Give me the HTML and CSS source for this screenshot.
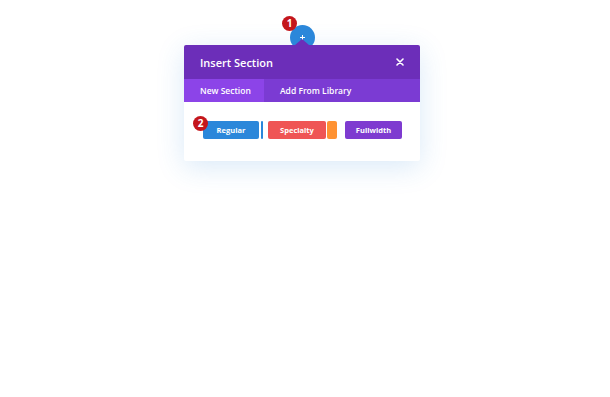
FILE: index.html
```html
<!DOCTYPE html>
<html lang="en">
<head>
<meta charset="utf-8">
<title>Insert Section</title>
<link rel="stylesheet" href="styles.css">
</head>
<body>
<div class="stage">
  <div class="modal">
    <div class="add-btn"><span class="plus"></span></div>
    <div class="notch"></div>
    <div class="badge badge-one">1</div>
    <div class="header">
      <span class="title">Insert Section</span>
      <svg class="close" width="8" height="8" viewBox="0 0 8 8"><path d="M1 1L7 7M7 1L1 7" stroke="#fff" stroke-width="1.6" stroke-linecap="round"/></svg>
    </div>
    <div class="tabs">
      <div class="tab active">New Section</div>
      <div class="tab">Add From Library</div>
    </div>
    <div class="body">
      <div class="badge badge-two">2</div>
      <div class="group">
        <div class="btn blue">Regular</div>
        <div class="bar blue thin"></div>
      </div>
      <div class="group tight">
        <div class="btn red">Specialty</div>
        <div class="bar orange"></div>
      </div>
      <div class="group wide">
        <div class="btn purple">Fullwidth</div>
      </div>
    </div>
  </div>
</div>
</body>
</html>
```

FILE: styles.css
```css
* { box-sizing: border-box; }
html, body { margin: 0; background: #fff; }
body { font-family: "Open Sans", "Liberation Sans", sans-serif; width: 610px; height: 397px; overflow: hidden; }
.stage { padding: 45px 0 0 184px; }
.modal {
  position: relative;
  width: 236px;
  background: #fff;
  border-radius: 2px;
  box-shadow: 0 6px 28px rgba(43, 135, 218, 0.18);
}
.add-btn {
  position: absolute;
  left: 106px;
  top: -20px;
  width: 25px;
  height: 25px;
  border-radius: 50%;
  background: #2b87da;
}
.plus {
  position: absolute;
  left: 10px;
  top: 10px;
  width: 5px;
  height: 5px;
}
.plus::before, .plus::after {
  content: "";
  position: absolute;
  background: #fff;
}
.plus::before { left: 2px; top: 0; width: 1px; height: 5px; }
.plus::after { left: 0; top: 2px; width: 5px; height: 1px; }
.notch {
  position: absolute;
  left: 111px;
  top: -6px;
  width: 0;
  height: 0;
  border-left: 7px solid transparent;
  border-right: 7px solid transparent;
  border-bottom: 6px solid #6c2eb9;
  z-index: 2;
}
.badge {
  position: absolute;
  width: 15px;
  height: 15px;
  border-radius: 50%;
  background: #c4161c;
  color: #fff;
  font-size: 10px;
  font-weight: 700;
  line-height: 15px;
  text-align: center;
  z-index: 3;
}
.badge-one { left: 98px; top: -29px; }
.badge-two { left: 9px; top: 14px; }
.header {
  position: relative;
  z-index: 1;
  height: 34px;
  background: #6c2eb9;
  border-radius: 2px 2px 0 0;
  display: flex;
  align-items: center;
  justify-content: space-between;
  padding: 0 16px 0 16px;
}
.title { color: #fff; font-size: 11px; font-weight: 600; }
.close { display: block; }
.tabs {
  display: flex;
  height: 23px;
  background: #7b3bd3;
}
.tab {
  display: flex;
  align-items: center;
  padding: 0 16px;
  color: #fff;
  font-size: 8.5px;
  font-weight: 600;
  white-space: nowrap;
}
.tab.active { background: #8c44e8; width: 80px; }
.body {
  position: relative;
  display: flex;
  padding: 19px 0 22px 19px;
  gap: 5px;
}
.group { display: flex; gap: 2px; height: 18px; }
.group.tight { gap: 1px; }
.group.wide { margin-left: 3px; }
.btn {
  display: flex;
  align-items: center;
  justify-content: center;
  color: #fff;
  font-size: 7.5px;
  font-weight: 700;
  border-radius: 2px;
}
.btn.blue { width: 56px; }
.btn.red { width: 58px; }
.btn.purple { width: 57px; }
.bar { border-radius: 2px; }
.bar.thin { width: 2px; border-radius: 1px; }
.bar.orange { width: 10px; background: #ff9232; }
.blue { background: #2b87da; }
.red { background: #ef5555; }
.purple { background: #7e3bd0; }
```
